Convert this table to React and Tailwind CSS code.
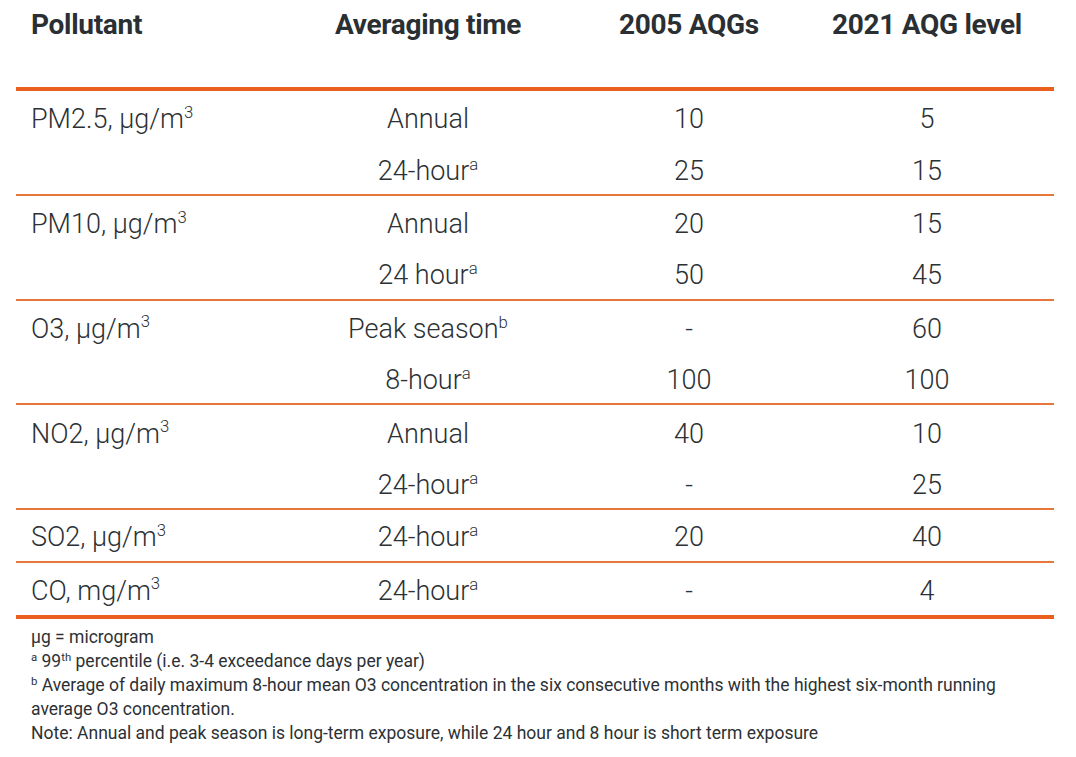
import React from "react";

const rows = [
  { group: [
    { p: "PM2.5, µg/m", t: "Annual", s: null, a: "10", b: "5" },
    { p: null, t: "24-hour", s: "a", a: "25", b: "15" },
  ]},
  { group: [
    { p: "PM10, µg/m", t: "Annual", s: null, a: "20", b: "15" },
    { p: null, t: "24 hour", s: "a", a: "50", b: "45" },
  ]},
  { group: [
    { p: "O3, µg/m", t: "Peak season", s: "b", a: "-", b: "60" },
    { p: null, t: "8-hour", s: "a", a: "100", b: "100" },
  ]},
  { group: [
    { p: "NO2, µg/m", t: "Annual", s: null, a: "40", b: "10" },
    { p: null, t: "24-hour", s: "a", a: "-", b: "25" },
  ]},
  { group: [
    { p: "SO2, µg/m", t: "24-hour", s: "a", a: "20", b: "40" },
  ]},
  { group: [
    { p: "CO, mg/m", t: "24-hour", s: "a", a: "-", b: "4" },
  ]},
];

function Row({ r, last, lastGroup }) {
  const border = last && !lastGroup ? "border-b-2 border-[#e6763a]" : "";
  return (
    <div className={`grid grid-cols-[262px_300px_222px_254px] h-[52.4px] items-center pt-[4px] text-[27px] leading-[32px] font-light ${border}`}>
      <div className="pl-[15px]">
        {r.p && (
          <span>
            {r.p}
            <sup className="text-[0.62em] top-[-0.62em]">3</sup>
          </span>
        )}
      </div>
      <div className="text-center">
        {r.t}
        {r.s && <sup className="text-[0.62em] top-[-0.6em]">{r.s}</sup>}
      </div>
      <div className="text-center">{r.a}</div>
      <div className="text-center">{r.b}</div>
    </div>
  );
}

export default function App() {
  return (
    <div
      className="w-[1076px] h-[757px] bg-white text-[#2c3135] overflow-hidden"
      style={{ fontFamily: "Roboto, 'Liberation Sans', sans-serif" }}
    >
      <div className="ml-[16px] w-[1038px]">
        <div className="grid grid-cols-[262px_300px_222px_254px] h-[87px] pt-[8px] text-[28px] leading-[34px] font-bold text-[#2a2f33] tracking-[-0.3px]">
          <div className="pl-[15px]">Pollutant</div>
          <div className="text-center">Averaging time</div>
          <div className="text-center">2005 AQGs</div>
          <div className="text-center">2021 AQG level</div>
        </div>
        <div className="h-[4px] bg-[#e8601c]" />
        {rows.map((g, gi) => (
          <div key={gi}>
            {g.group.map((r, ri) => (
              <Row
                key={ri}
                r={r}
                last={ri === g.group.length - 1}
                lastGroup={gi === rows.length - 1}
              />
            ))}
          </div>
        ))}
        <div className="h-[4px] bg-[#e8601c]" />
        <div className="mt-[6px] pl-[15px] text-[17.5px] leading-[24px] text-[#2c3135]">
          <div>µg = microgram</div>
          <div>
            <sup className="text-[0.65em] top-[-0.5em]">a</sup> 99
            <sup className="text-[0.65em] top-[-0.55em]">th</sup> percentile (i.e. 3-4 exceedance days per year)
          </div>
          <div>
            <sup className="text-[0.65em] top-[-0.5em]">b</sup> Average of daily maximum 8-hour mean O3 concentration in the six consecutive months with the highest six-month running
            <br />
            average O3 concentration.
          </div>
          <div>Note: Annual and peak season is long-term exposure, while 24 hour and 8 hour is short term exposure</div>
        </div>
      </div>
    </div>
  );
}
